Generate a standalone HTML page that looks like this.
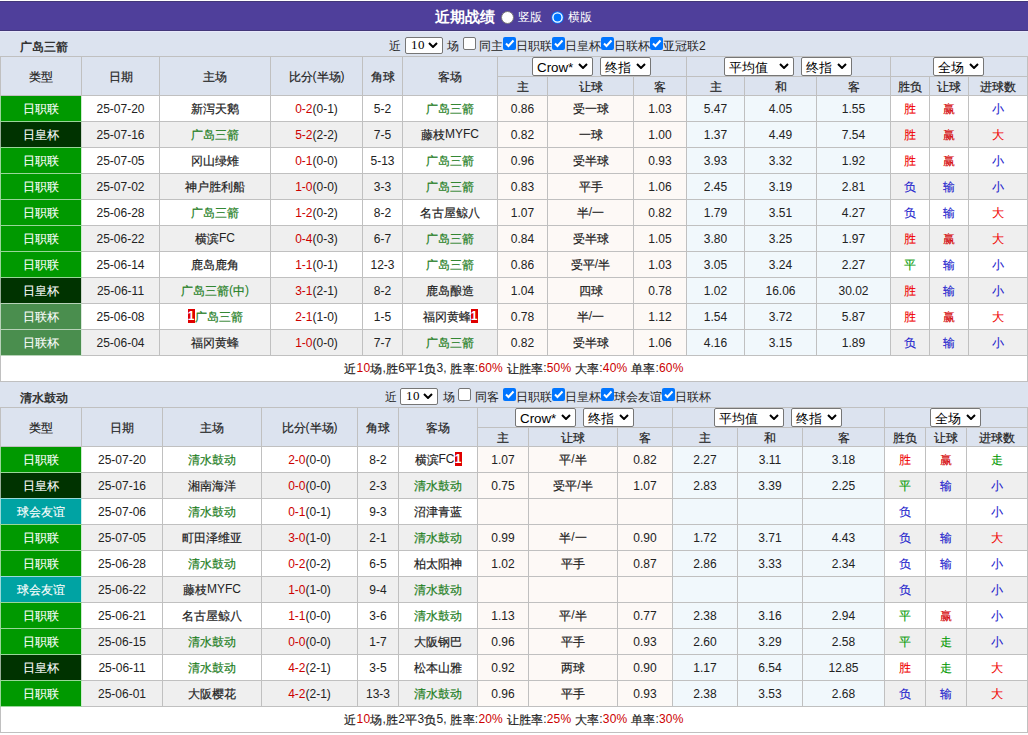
<!DOCTYPE html><html><head><meta charset="utf-8"><style>
*{margin:0;padding:0;box-sizing:content-box}
html,body{width:1028px;height:735px;overflow:hidden;background:#fff}
body{position:relative;font-family:"Liberation Sans",sans-serif;font-size:12px;color:#222}
div{position:absolute}
.c{display:flex;align-items:center;justify-content:center;white-space:nowrap}
.t{white-space:nowrap;line-height:14px}
.sel{background:#fff;border:1px solid #767676;border-radius:2px;color:#000;white-space:nowrap;text-indent:4px}
.sel .chev{position:absolute}
.cb{width:11px;height:11px;border:1px solid #767676;border-radius:2px;background:#fff}
.cb.on{width:13px;height:13px;border:0;background:#0075ff}
.cb svg{position:absolute;left:0;top:0}
.k{font-style:normal;position:relative;top:1px;-webkit-text-stroke:0.2px currentColor}
.r .k{-webkit-text-stroke:0.1px currentColor}
.ty .k{-webkit-text-stroke:0.1px currentColor}
.bd{display:inline-block;background:#e00000;color:#fff;font-weight:bold;width:7px;text-align:center;line-height:14px;height:14px;font-size:12px}
</style></head><body><div style="left:0;top:1px;width:1028px;height:28px;background:#4f3f9b;border-top:1px solid #433879;border-bottom:1px solid #433879"></div>
<div style="left:0;top:31px;width:1028px;height:1px;background:#e8e8fb"></div>
<div style="left:0;top:32px;width:1028px;height:701px;background:#dce3ef"></div>
<div class="t" style="left:435px;top:9px;color:#fff;font-weight:bold;font-size:15px;line-height:16px">近期战绩</div>
<div style="left:501px;top:11px;width:11px;height:11px;border:1px solid #767676;border-radius:50%;background:#fff"></div>
<div class="t" style="left:518px;top:10px;color:#fff">竖版</div>
<svg style="position:absolute;left:551px;top:11px" width="13" height="13" viewBox="0 0 13 13"><circle cx="6.5" cy="6.5" r="6.2" fill="#0075ff"/><circle cx="6.5" cy="6.5" r="4.6" fill="none" stroke="#fff" stroke-width="1.4"/></svg>
<div class="t" style="left:568px;top:10px;color:#fff">横版</div>
<div class="t" style="left:20px;top:40px;font-weight:bold;color:#333">广岛三箭</div>
<div class="t" style="left:389px;top:39px;">近</div>
<div class="sel" style="left:405px;top:37px;width:36px;height:15px;font-family:'Liberation Serif',serif;letter-spacing:0.5px;text-indent:5px;font-size:13px;line-height:15px"><span style="position:relative;top:-1px">10</span><svg class="chev" style="left:22px;top:4px" width="10" height="6" viewBox="0 0 10 6"><path d="M1 1 L5 5 L9 1" fill="none" stroke="#000" stroke-width="2"/></svg></div>
<div class="t" style="left:447px;top:39px;">场</div>
<div class="cb" style="left:463px;top:37px"></div>
<div class="t" style="left:479px;top:39px;">同主</div>
<div class="cb on" style="left:503px;top:37px"><svg width="13" height="13" viewBox="0 0 13 13"><path d="M3 6.5 L5.5 9 L10.5 3.5" fill="none" stroke="#fff" stroke-width="2"/></svg></div>
<div class="t" style="left:516px;top:39px;">日职联</div>
<div class="cb on" style="left:552px;top:37px"><svg width="13" height="13" viewBox="0 0 13 13"><path d="M3 6.5 L5.5 9 L10.5 3.5" fill="none" stroke="#fff" stroke-width="2"/></svg></div>
<div class="t" style="left:565px;top:39px;">日皇杯</div>
<div class="cb on" style="left:601px;top:37px"><svg width="13" height="13" viewBox="0 0 13 13"><path d="M3 6.5 L5.5 9 L10.5 3.5" fill="none" stroke="#fff" stroke-width="2"/></svg></div>
<div class="t" style="left:614px;top:39px;">日联杯</div>
<div class="cb on" style="left:650px;top:37px"><svg width="13" height="13" viewBox="0 0 13 13"><path d="M3 6.5 L5.5 9 L10.5 3.5" fill="none" stroke="#fff" stroke-width="2"/></svg></div>
<div class="t" style="left:663px;top:39px;">亚冠联2</div>
<div style="left:0;top:56px;width:1028px;height:326px;background:#c0c0c0"></div>
<div class="c" style="left:1px;top:57px;width:80px;height:38px;background:#dce3ef"><span><i class="k">类型</i></span></div>
<div class="c" style="left:82px;top:57px;width:77px;height:38px;background:#dce3ef"><span><i class="k">日期</i></span></div>
<div class="c" style="left:160px;top:57px;width:110px;height:38px;background:#dce3ef"><span><i class="k">主场</i></span></div>
<div class="c" style="left:271px;top:57px;width:91px;height:38px;background:#dce3ef"><span><i class="k">比分</i>(<i class="k">半场</i>)</span></div>
<div class="c" style="left:363px;top:57px;width:39px;height:38px;background:#dce3ef"><span><i class="k">角球</i></span></div>
<div class="c" style="left:403px;top:57px;width:94px;height:38px;background:#dce3ef"><span><i class="k">客场</i></span></div>
<div style="left:498px;top:57px;width:188px;height:19px;background:#dce3ef"></div>
<div style="left:687px;top:57px;width:203px;height:19px;background:#dce3ef"></div>
<div style="left:891px;top:57px;width:136px;height:19px;background:#dce3ef"></div>
<div class="c" style="left:498px;top:77px;width:49px;height:18px;background:#dce3ef"><span><i class="k">主</i></span></div>
<div class="c" style="left:548px;top:77px;width:85px;height:18px;background:#dce3ef"><span><i class="k">让球</i></span></div>
<div class="c" style="left:634px;top:77px;width:52px;height:18px;background:#dce3ef"><span><i class="k">客</i></span></div>
<div class="c" style="left:687px;top:77px;width:57px;height:18px;background:#dce3ef"><span><i class="k">主</i></span></div>
<div class="c" style="left:745px;top:77px;width:71px;height:18px;background:#dce3ef"><span><i class="k">和</i></span></div>
<div class="c" style="left:817px;top:77px;width:73px;height:18px;background:#dce3ef"><span><i class="k">客</i></span></div>
<div class="c" style="left:891px;top:77px;width:38px;height:18px;background:#dce3ef"><span><i class="k">胜负</i></span></div>
<div class="c" style="left:930px;top:77px;width:38px;height:18px;background:#dce3ef"><span><i class="k">让球</i></span></div>
<div class="c" style="left:969px;top:77px;width:58px;height:18px;background:#dce3ef"><span><i class="k">进球数</i></span></div>
<div class="sel" style="left:532px;top:57px;width:59px;height:17px;font-family:'Liberation Sans',sans-serif;font-size:13.33px;line-height:17px"><span style="position:relative;top:1px">Crow*</span><svg class="chev" style="left:45px;top:5px" width="10" height="6" viewBox="0 0 10 6"><path d="M1 1 L5 5 L9 1" fill="none" stroke="#000" stroke-width="2"/></svg></div>
<div class="sel" style="left:600px;top:57px;width:49px;height:17px;font-family:'Liberation Sans',sans-serif;font-size:13.33px;line-height:17px"><span style="position:relative;top:1px">终指</span><svg class="chev" style="left:35px;top:5px" width="10" height="6" viewBox="0 0 10 6"><path d="M1 1 L5 5 L9 1" fill="none" stroke="#000" stroke-width="2"/></svg></div>
<div class="sel" style="left:724px;top:57px;width:68px;height:17px;font-family:'Liberation Sans',sans-serif;font-size:13.33px;line-height:17px"><span style="position:relative;top:1px">平均值</span><svg class="chev" style="left:54px;top:5px" width="10" height="6" viewBox="0 0 10 6"><path d="M1 1 L5 5 L9 1" fill="none" stroke="#000" stroke-width="2"/></svg></div>
<div class="sel" style="left:801px;top:57px;width:49px;height:17px;font-family:'Liberation Sans',sans-serif;font-size:13.33px;line-height:17px"><span style="position:relative;top:1px">终指</span><svg class="chev" style="left:35px;top:5px" width="10" height="6" viewBox="0 0 10 6"><path d="M1 1 L5 5 L9 1" fill="none" stroke="#000" stroke-width="2"/></svg></div>
<div class="sel" style="left:933px;top:57px;width:49px;height:17px;font-family:'Liberation Sans',sans-serif;font-size:13.33px;line-height:17px"><span style="position:relative;top:1px">全场</span><svg class="chev" style="left:35px;top:5px" width="10" height="6" viewBox="0 0 10 6"><path d="M1 1 L5 5 L9 1" fill="none" stroke="#000" stroke-width="2"/></svg></div>
<div style="left:0px;top:96px;width:1px;height:25px;background:#99d699"></div>
<div style="left:81px;top:96px;width:1px;height:25px;background:#ccebcc"></div>
<div class="c" style="left:1px;top:96px;width:80px;height:25px;background:#009900;color:#fff"><span><span class="ty"><i class="k">日职联</i></span></span></div>
<div style="left:0px;top:121px;width:82px;height:1px;background:#99d699"></div>
<div class="c" style="left:82px;top:96px;width:77px;height:25px;background:#fff"><span>25-07-20</span></div>
<div class="c" style="left:160px;top:96px;width:110px;height:25px;background:#fff"><span><i class="k">新泻天鹅</i></span></div>
<div class="c" style="left:271px;top:96px;width:91px;height:25px;background:#fff"><span><span style="color:#cc0000">0-2</span>(0-1)</span></div>
<div class="c" style="left:363px;top:96px;width:39px;height:25px;background:#fff"><span>5-2</span></div>
<div class="c" style="left:403px;top:96px;width:94px;height:25px;background:#fff"><span><span style="color:#1f801f"><i class="k">广岛三箭</i></span></span></div>
<div class="c" style="left:498px;top:96px;width:49px;height:25px;background:#fdf9f6"><span>0.86</span></div>
<div class="c" style="left:548px;top:96px;width:85px;height:25px;background:#fdf9f6"><span><i class="k">受一球</i></span></div>
<div class="c" style="left:634px;top:96px;width:52px;height:25px;background:#fdf9f6"><span>1.03</span></div>
<div class="c" style="left:687px;top:96px;width:57px;height:25px;background:#f1f8fc"><span>5.47</span></div>
<div class="c" style="left:745px;top:96px;width:71px;height:25px;background:#f1f8fc"><span>4.05</span></div>
<div class="c" style="left:817px;top:96px;width:73px;height:25px;background:#f1f8fc"><span>1.55</span></div>
<div class="c" style="left:891px;top:96px;width:38px;height:25px;background:#fff"><span><span class="r" style="color:#f00000"><i class="k">胜</i></span></span></div>
<div class="c" style="left:930px;top:96px;width:38px;height:25px;background:#fff"><span><span class="r" style="color:#d40000"><i class="k">赢</i></span></span></div>
<div class="c" style="left:969px;top:96px;width:58px;height:25px;background:#fff"><span><span class="r" style="color:#1a1acc"><i class="k">小</i></span></span></div>
<div style="left:0px;top:122px;width:1px;height:25px;background:#99ad99"></div>
<div style="left:81px;top:122px;width:1px;height:25px;background:#ccd6cc"></div>
<div class="c" style="left:1px;top:122px;width:80px;height:25px;background:#003300;color:#fff"><span><span class="ty"><i class="k">日皇杯</i></span></span></div>
<div style="left:0px;top:147px;width:82px;height:1px;background:#99d699"></div>
<div class="c" style="left:82px;top:122px;width:77px;height:25px;background:#efefef"><span>25-07-16</span></div>
<div class="c" style="left:160px;top:122px;width:110px;height:25px;background:#efefef"><span><span style="color:#1f801f"><i class="k">广岛三箭</i></span></span></div>
<div class="c" style="left:271px;top:122px;width:91px;height:25px;background:#efefef"><span><span style="color:#cc0000">5-2</span>(2-2)</span></div>
<div class="c" style="left:363px;top:122px;width:39px;height:25px;background:#efefef"><span>7-5</span></div>
<div class="c" style="left:403px;top:122px;width:94px;height:25px;background:#efefef"><span><i class="k">藤枝</i>MYFC</span></div>
<div class="c" style="left:498px;top:122px;width:49px;height:25px;background:#fdf9f6"><span>0.82</span></div>
<div class="c" style="left:548px;top:122px;width:85px;height:25px;background:#fdf9f6"><span><i class="k">一球</i></span></div>
<div class="c" style="left:634px;top:122px;width:52px;height:25px;background:#fdf9f6"><span>1.00</span></div>
<div class="c" style="left:687px;top:122px;width:57px;height:25px;background:#f1f8fc"><span>1.37</span></div>
<div class="c" style="left:745px;top:122px;width:71px;height:25px;background:#f1f8fc"><span>4.49</span></div>
<div class="c" style="left:817px;top:122px;width:73px;height:25px;background:#f1f8fc"><span>7.54</span></div>
<div class="c" style="left:891px;top:122px;width:38px;height:25px;background:#efefef"><span><span class="r" style="color:#f00000"><i class="k">胜</i></span></span></div>
<div class="c" style="left:930px;top:122px;width:38px;height:25px;background:#efefef"><span><span class="r" style="color:#d40000"><i class="k">赢</i></span></span></div>
<div class="c" style="left:969px;top:122px;width:58px;height:25px;background:#efefef"><span><span class="r" style="color:#f00000"><i class="k">大</i></span></span></div>
<div style="left:0px;top:148px;width:1px;height:25px;background:#99d699"></div>
<div style="left:81px;top:148px;width:1px;height:25px;background:#ccebcc"></div>
<div class="c" style="left:1px;top:148px;width:80px;height:25px;background:#009900;color:#fff"><span><span class="ty"><i class="k">日职联</i></span></span></div>
<div style="left:0px;top:173px;width:82px;height:1px;background:#99d699"></div>
<div class="c" style="left:82px;top:148px;width:77px;height:25px;background:#fff"><span>25-07-05</span></div>
<div class="c" style="left:160px;top:148px;width:110px;height:25px;background:#fff"><span><i class="k">冈山绿雉</i></span></div>
<div class="c" style="left:271px;top:148px;width:91px;height:25px;background:#fff"><span><span style="color:#cc0000">0-1</span>(0-0)</span></div>
<div class="c" style="left:363px;top:148px;width:39px;height:25px;background:#fff"><span>5-13</span></div>
<div class="c" style="left:403px;top:148px;width:94px;height:25px;background:#fff"><span><span style="color:#1f801f"><i class="k">广岛三箭</i></span></span></div>
<div class="c" style="left:498px;top:148px;width:49px;height:25px;background:#fdf9f6"><span>0.96</span></div>
<div class="c" style="left:548px;top:148px;width:85px;height:25px;background:#fdf9f6"><span><i class="k">受半球</i></span></div>
<div class="c" style="left:634px;top:148px;width:52px;height:25px;background:#fdf9f6"><span>0.93</span></div>
<div class="c" style="left:687px;top:148px;width:57px;height:25px;background:#f1f8fc"><span>3.93</span></div>
<div class="c" style="left:745px;top:148px;width:71px;height:25px;background:#f1f8fc"><span>3.32</span></div>
<div class="c" style="left:817px;top:148px;width:73px;height:25px;background:#f1f8fc"><span>1.92</span></div>
<div class="c" style="left:891px;top:148px;width:38px;height:25px;background:#fff"><span><span class="r" style="color:#f00000"><i class="k">胜</i></span></span></div>
<div class="c" style="left:930px;top:148px;width:38px;height:25px;background:#fff"><span><span class="r" style="color:#d40000"><i class="k">赢</i></span></span></div>
<div class="c" style="left:969px;top:148px;width:58px;height:25px;background:#fff"><span><span class="r" style="color:#1a1acc"><i class="k">小</i></span></span></div>
<div style="left:0px;top:174px;width:1px;height:25px;background:#99d699"></div>
<div style="left:81px;top:174px;width:1px;height:25px;background:#ccebcc"></div>
<div class="c" style="left:1px;top:174px;width:80px;height:25px;background:#009900;color:#fff"><span><span class="ty"><i class="k">日职联</i></span></span></div>
<div style="left:0px;top:199px;width:82px;height:1px;background:#99d699"></div>
<div class="c" style="left:82px;top:174px;width:77px;height:25px;background:#efefef"><span>25-07-02</span></div>
<div class="c" style="left:160px;top:174px;width:110px;height:25px;background:#efefef"><span><i class="k">神户胜利船</i></span></div>
<div class="c" style="left:271px;top:174px;width:91px;height:25px;background:#efefef"><span><span style="color:#cc0000">1-0</span>(0-0)</span></div>
<div class="c" style="left:363px;top:174px;width:39px;height:25px;background:#efefef"><span>3-3</span></div>
<div class="c" style="left:403px;top:174px;width:94px;height:25px;background:#efefef"><span><span style="color:#1f801f"><i class="k">广岛三箭</i></span></span></div>
<div class="c" style="left:498px;top:174px;width:49px;height:25px;background:#fdf9f6"><span>0.83</span></div>
<div class="c" style="left:548px;top:174px;width:85px;height:25px;background:#fdf9f6"><span><i class="k">平手</i></span></div>
<div class="c" style="left:634px;top:174px;width:52px;height:25px;background:#fdf9f6"><span>1.06</span></div>
<div class="c" style="left:687px;top:174px;width:57px;height:25px;background:#f1f8fc"><span>2.45</span></div>
<div class="c" style="left:745px;top:174px;width:71px;height:25px;background:#f1f8fc"><span>3.19</span></div>
<div class="c" style="left:817px;top:174px;width:73px;height:25px;background:#f1f8fc"><span>2.81</span></div>
<div class="c" style="left:891px;top:174px;width:38px;height:25px;background:#efefef"><span><span class="r" style="color:#1a1acc"><i class="k">负</i></span></span></div>
<div class="c" style="left:930px;top:174px;width:38px;height:25px;background:#efefef"><span><span class="r" style="color:#1a1acc"><i class="k">输</i></span></span></div>
<div class="c" style="left:969px;top:174px;width:58px;height:25px;background:#efefef"><span><span class="r" style="color:#1a1acc"><i class="k">小</i></span></span></div>
<div style="left:0px;top:200px;width:1px;height:25px;background:#99d699"></div>
<div style="left:81px;top:200px;width:1px;height:25px;background:#ccebcc"></div>
<div class="c" style="left:1px;top:200px;width:80px;height:25px;background:#009900;color:#fff"><span><span class="ty"><i class="k">日职联</i></span></span></div>
<div style="left:0px;top:225px;width:82px;height:1px;background:#99d699"></div>
<div class="c" style="left:82px;top:200px;width:77px;height:25px;background:#fff"><span>25-06-28</span></div>
<div class="c" style="left:160px;top:200px;width:110px;height:25px;background:#fff"><span><span style="color:#1f801f"><i class="k">广岛三箭</i></span></span></div>
<div class="c" style="left:271px;top:200px;width:91px;height:25px;background:#fff"><span><span style="color:#cc0000">1-2</span>(0-2)</span></div>
<div class="c" style="left:363px;top:200px;width:39px;height:25px;background:#fff"><span>8-2</span></div>
<div class="c" style="left:403px;top:200px;width:94px;height:25px;background:#fff"><span><i class="k">名古屋鲸八</i></span></div>
<div class="c" style="left:498px;top:200px;width:49px;height:25px;background:#fdf9f6"><span>1.07</span></div>
<div class="c" style="left:548px;top:200px;width:85px;height:25px;background:#fdf9f6"><span><i class="k">半</i>/<i class="k">一</i></span></div>
<div class="c" style="left:634px;top:200px;width:52px;height:25px;background:#fdf9f6"><span>0.82</span></div>
<div class="c" style="left:687px;top:200px;width:57px;height:25px;background:#f1f8fc"><span>1.79</span></div>
<div class="c" style="left:745px;top:200px;width:71px;height:25px;background:#f1f8fc"><span>3.51</span></div>
<div class="c" style="left:817px;top:200px;width:73px;height:25px;background:#f1f8fc"><span>4.27</span></div>
<div class="c" style="left:891px;top:200px;width:38px;height:25px;background:#fff"><span><span class="r" style="color:#1a1acc"><i class="k">负</i></span></span></div>
<div class="c" style="left:930px;top:200px;width:38px;height:25px;background:#fff"><span><span class="r" style="color:#1a1acc"><i class="k">输</i></span></span></div>
<div class="c" style="left:969px;top:200px;width:58px;height:25px;background:#fff"><span><span class="r" style="color:#f00000"><i class="k">大</i></span></span></div>
<div style="left:0px;top:226px;width:1px;height:25px;background:#99d699"></div>
<div style="left:81px;top:226px;width:1px;height:25px;background:#ccebcc"></div>
<div class="c" style="left:1px;top:226px;width:80px;height:25px;background:#009900;color:#fff"><span><span class="ty"><i class="k">日职联</i></span></span></div>
<div style="left:0px;top:251px;width:82px;height:1px;background:#99d699"></div>
<div class="c" style="left:82px;top:226px;width:77px;height:25px;background:#efefef"><span>25-06-22</span></div>
<div class="c" style="left:160px;top:226px;width:110px;height:25px;background:#efefef"><span><i class="k">横滨</i>FC</span></div>
<div class="c" style="left:271px;top:226px;width:91px;height:25px;background:#efefef"><span><span style="color:#cc0000">0-4</span>(0-3)</span></div>
<div class="c" style="left:363px;top:226px;width:39px;height:25px;background:#efefef"><span>6-7</span></div>
<div class="c" style="left:403px;top:226px;width:94px;height:25px;background:#efefef"><span><span style="color:#1f801f"><i class="k">广岛三箭</i></span></span></div>
<div class="c" style="left:498px;top:226px;width:49px;height:25px;background:#fdf9f6"><span>0.84</span></div>
<div class="c" style="left:548px;top:226px;width:85px;height:25px;background:#fdf9f6"><span><i class="k">受半球</i></span></div>
<div class="c" style="left:634px;top:226px;width:52px;height:25px;background:#fdf9f6"><span>1.05</span></div>
<div class="c" style="left:687px;top:226px;width:57px;height:25px;background:#f1f8fc"><span>3.80</span></div>
<div class="c" style="left:745px;top:226px;width:71px;height:25px;background:#f1f8fc"><span>3.25</span></div>
<div class="c" style="left:817px;top:226px;width:73px;height:25px;background:#f1f8fc"><span>1.97</span></div>
<div class="c" style="left:891px;top:226px;width:38px;height:25px;background:#efefef"><span><span class="r" style="color:#f00000"><i class="k">胜</i></span></span></div>
<div class="c" style="left:930px;top:226px;width:38px;height:25px;background:#efefef"><span><span class="r" style="color:#d40000"><i class="k">赢</i></span></span></div>
<div class="c" style="left:969px;top:226px;width:58px;height:25px;background:#efefef"><span><span class="r" style="color:#f00000"><i class="k">大</i></span></span></div>
<div style="left:0px;top:252px;width:1px;height:25px;background:#99d699"></div>
<div style="left:81px;top:252px;width:1px;height:25px;background:#ccebcc"></div>
<div class="c" style="left:1px;top:252px;width:80px;height:25px;background:#009900;color:#fff"><span><span class="ty"><i class="k">日职联</i></span></span></div>
<div style="left:0px;top:277px;width:82px;height:1px;background:#99d699"></div>
<div class="c" style="left:82px;top:252px;width:77px;height:25px;background:#fff"><span>25-06-14</span></div>
<div class="c" style="left:160px;top:252px;width:110px;height:25px;background:#fff"><span><i class="k">鹿岛鹿角</i></span></div>
<div class="c" style="left:271px;top:252px;width:91px;height:25px;background:#fff"><span><span style="color:#cc0000">1-1</span>(0-1)</span></div>
<div class="c" style="left:363px;top:252px;width:39px;height:25px;background:#fff"><span>12-3</span></div>
<div class="c" style="left:403px;top:252px;width:94px;height:25px;background:#fff"><span><span style="color:#1f801f"><i class="k">广岛三箭</i></span></span></div>
<div class="c" style="left:498px;top:252px;width:49px;height:25px;background:#fdf9f6"><span>0.86</span></div>
<div class="c" style="left:548px;top:252px;width:85px;height:25px;background:#fdf9f6"><span><i class="k">受平</i>/<i class="k">半</i></span></div>
<div class="c" style="left:634px;top:252px;width:52px;height:25px;background:#fdf9f6"><span>1.03</span></div>
<div class="c" style="left:687px;top:252px;width:57px;height:25px;background:#f1f8fc"><span>3.05</span></div>
<div class="c" style="left:745px;top:252px;width:71px;height:25px;background:#f1f8fc"><span>3.24</span></div>
<div class="c" style="left:817px;top:252px;width:73px;height:25px;background:#f1f8fc"><span>2.27</span></div>
<div class="c" style="left:891px;top:252px;width:38px;height:25px;background:#fff"><span><span class="r" style="color:#009900"><i class="k">平</i></span></span></div>
<div class="c" style="left:930px;top:252px;width:38px;height:25px;background:#fff"><span><span class="r" style="color:#1a1acc"><i class="k">输</i></span></span></div>
<div class="c" style="left:969px;top:252px;width:58px;height:25px;background:#fff"><span><span class="r" style="color:#1a1acc"><i class="k">小</i></span></span></div>
<div style="left:0px;top:278px;width:1px;height:25px;background:#99ad99"></div>
<div style="left:81px;top:278px;width:1px;height:25px;background:#ccd6cc"></div>
<div class="c" style="left:1px;top:278px;width:80px;height:25px;background:#003300;color:#fff"><span><span class="ty"><i class="k">日皇杯</i></span></span></div>
<div style="left:0px;top:303px;width:82px;height:1px;background:#b7d2b8"></div>
<div class="c" style="left:82px;top:278px;width:77px;height:25px;background:#efefef"><span>25-06-11</span></div>
<div class="c" style="left:160px;top:278px;width:110px;height:25px;background:#efefef"><span><span style="color:#1f801f"><i class="k">广岛三箭</i>(<i class="k">中</i>)</span></span></div>
<div class="c" style="left:271px;top:278px;width:91px;height:25px;background:#efefef"><span><span style="color:#cc0000">3-1</span>(2-1)</span></div>
<div class="c" style="left:363px;top:278px;width:39px;height:25px;background:#efefef"><span>8-2</span></div>
<div class="c" style="left:403px;top:278px;width:94px;height:25px;background:#efefef"><span><i class="k">鹿岛酿造</i></span></div>
<div class="c" style="left:498px;top:278px;width:49px;height:25px;background:#fdf9f6"><span>1.04</span></div>
<div class="c" style="left:548px;top:278px;width:85px;height:25px;background:#fdf9f6"><span><i class="k">四球</i></span></div>
<div class="c" style="left:634px;top:278px;width:52px;height:25px;background:#fdf9f6"><span>0.78</span></div>
<div class="c" style="left:687px;top:278px;width:57px;height:25px;background:#f1f8fc"><span>1.02</span></div>
<div class="c" style="left:745px;top:278px;width:71px;height:25px;background:#f1f8fc"><span>16.06</span></div>
<div class="c" style="left:817px;top:278px;width:73px;height:25px;background:#f1f8fc"><span>30.02</span></div>
<div class="c" style="left:891px;top:278px;width:38px;height:25px;background:#efefef"><span><span class="r" style="color:#f00000"><i class="k">胜</i></span></span></div>
<div class="c" style="left:930px;top:278px;width:38px;height:25px;background:#efefef"><span><span class="r" style="color:#1a1acc"><i class="k">输</i></span></span></div>
<div class="c" style="left:969px;top:278px;width:58px;height:25px;background:#efefef"><span><span class="r" style="color:#1a1acc"><i class="k">小</i></span></span></div>
<div style="left:0px;top:304px;width:1px;height:25px;background:#b7d2b8"></div>
<div style="left:81px;top:304px;width:1px;height:25px;background:#dbe8dc"></div>
<div class="c" style="left:1px;top:304px;width:80px;height:25px;background:#4a8e4e;color:#fff"><span><span class="ty"><i class="k">日联杯</i></span></span></div>
<div style="left:0px;top:329px;width:82px;height:1px;background:#b7d2b8"></div>
<div class="c" style="left:82px;top:304px;width:77px;height:25px;background:#fff"><span>25-06-08</span></div>
<div class="c" style="left:160px;top:304px;width:110px;height:25px;background:#fff"><span><b class="bd">1</b><span style="color:#1f801f"><i class="k">广岛三箭</i></span></span></div>
<div class="c" style="left:271px;top:304px;width:91px;height:25px;background:#fff"><span><span style="color:#cc0000">2-1</span>(1-0)</span></div>
<div class="c" style="left:363px;top:304px;width:39px;height:25px;background:#fff"><span>1-5</span></div>
<div class="c" style="left:403px;top:304px;width:94px;height:25px;background:#fff"><span><i class="k">福冈黄蜂</i><b class="bd">1</b></span></div>
<div class="c" style="left:498px;top:304px;width:49px;height:25px;background:#fdf9f6"><span>0.78</span></div>
<div class="c" style="left:548px;top:304px;width:85px;height:25px;background:#fdf9f6"><span><i class="k">半</i>/<i class="k">一</i></span></div>
<div class="c" style="left:634px;top:304px;width:52px;height:25px;background:#fdf9f6"><span>1.12</span></div>
<div class="c" style="left:687px;top:304px;width:57px;height:25px;background:#f1f8fc"><span>1.54</span></div>
<div class="c" style="left:745px;top:304px;width:71px;height:25px;background:#f1f8fc"><span>3.72</span></div>
<div class="c" style="left:817px;top:304px;width:73px;height:25px;background:#f1f8fc"><span>5.87</span></div>
<div class="c" style="left:891px;top:304px;width:38px;height:25px;background:#fff"><span><span class="r" style="color:#f00000"><i class="k">胜</i></span></span></div>
<div class="c" style="left:930px;top:304px;width:38px;height:25px;background:#fff"><span><span class="r" style="color:#d40000"><i class="k">赢</i></span></span></div>
<div class="c" style="left:969px;top:304px;width:58px;height:25px;background:#fff"><span><span class="r" style="color:#f00000"><i class="k">大</i></span></span></div>
<div style="left:0px;top:330px;width:1px;height:25px;background:#b7d2b8"></div>
<div style="left:81px;top:330px;width:1px;height:25px;background:#dbe8dc"></div>
<div class="c" style="left:1px;top:330px;width:80px;height:25px;background:#4a8e4e;color:#fff"><span><span class="ty"><i class="k">日联杯</i></span></span></div>
<div style="left:0px;top:355px;width:82px;height:1px;background:#b7d2b8"></div>
<div class="c" style="left:82px;top:330px;width:77px;height:25px;background:#efefef"><span>25-06-04</span></div>
<div class="c" style="left:160px;top:330px;width:110px;height:25px;background:#efefef"><span><i class="k">福冈黄蜂</i></span></div>
<div class="c" style="left:271px;top:330px;width:91px;height:25px;background:#efefef"><span><span style="color:#cc0000">1-0</span>(0-0)</span></div>
<div class="c" style="left:363px;top:330px;width:39px;height:25px;background:#efefef"><span>7-7</span></div>
<div class="c" style="left:403px;top:330px;width:94px;height:25px;background:#efefef"><span><span style="color:#1f801f"><i class="k">广岛三箭</i></span></span></div>
<div class="c" style="left:498px;top:330px;width:49px;height:25px;background:#fdf9f6"><span>0.82</span></div>
<div class="c" style="left:548px;top:330px;width:85px;height:25px;background:#fdf9f6"><span><i class="k">受半球</i></span></div>
<div class="c" style="left:634px;top:330px;width:52px;height:25px;background:#fdf9f6"><span>1.06</span></div>
<div class="c" style="left:687px;top:330px;width:57px;height:25px;background:#f1f8fc"><span>4.16</span></div>
<div class="c" style="left:745px;top:330px;width:71px;height:25px;background:#f1f8fc"><span>3.15</span></div>
<div class="c" style="left:817px;top:330px;width:73px;height:25px;background:#f1f8fc"><span>1.89</span></div>
<div class="c" style="left:891px;top:330px;width:38px;height:25px;background:#efefef"><span><span class="r" style="color:#1a1acc"><i class="k">负</i></span></span></div>
<div class="c" style="left:930px;top:330px;width:38px;height:25px;background:#efefef"><span><span class="r" style="color:#1a1acc"><i class="k">输</i></span></span></div>
<div class="c" style="left:969px;top:330px;width:58px;height:25px;background:#efefef"><span><span class="r" style="color:#1a1acc"><i class="k">小</i></span></span></div>
<div class="c" style="left:1px;top:356px;width:1026px;height:25px;background:#fff;letter-spacing:0.2px"><span><i class="k">近</i><span style="color:#cc0000">10</span><i class="k">场</i>,<i class="k">胜</i>6<i class="k">平</i>1<i class="k">负</i>3, <i class="k">胜率</i>:<span style="color:#cc0000">60%</span> <i class="k">让胜率</i>:<span style="color:#cc0000">50%</span> <i class="k">大率</i>:<span style="color:#cc0000">40%</span> <i class="k">单率</i>:<span style="color:#cc0000">60%</span></span></div>
<div style="left:0;top:382px;width:1028px;height:25px;background:#dce3ef"></div>
<div class="t" style="left:20px;top:391px;font-weight:bold;color:#333">清水鼓动</div>
<div class="t" style="left:385px;top:390px;">近</div>
<div class="sel" style="left:400px;top:388px;width:36px;height:15px;font-family:'Liberation Serif',serif;letter-spacing:0.5px;text-indent:5px;font-size:13px;line-height:15px"><span style="position:relative;top:-1px">10</span><svg class="chev" style="left:22px;top:4px" width="10" height="6" viewBox="0 0 10 6"><path d="M1 1 L5 5 L9 1" fill="none" stroke="#000" stroke-width="2"/></svg></div>
<div class="t" style="left:443px;top:390px;">场</div>
<div class="cb" style="left:458px;top:388px"></div>
<div class="t" style="left:475px;top:390px;">同客</div>
<div class="cb on" style="left:503px;top:388px"><svg width="13" height="13" viewBox="0 0 13 13"><path d="M3 6.5 L5.5 9 L10.5 3.5" fill="none" stroke="#fff" stroke-width="2"/></svg></div>
<div class="t" style="left:516px;top:390px;">日职联</div>
<div class="cb on" style="left:552px;top:388px"><svg width="13" height="13" viewBox="0 0 13 13"><path d="M3 6.5 L5.5 9 L10.5 3.5" fill="none" stroke="#fff" stroke-width="2"/></svg></div>
<div class="t" style="left:565px;top:390px;">日皇杯</div>
<div class="cb on" style="left:601px;top:388px"><svg width="13" height="13" viewBox="0 0 13 13"><path d="M3 6.5 L5.5 9 L10.5 3.5" fill="none" stroke="#fff" stroke-width="2"/></svg></div>
<div class="t" style="left:614px;top:390px;">球会友谊</div>
<div class="cb on" style="left:662px;top:388px"><svg width="13" height="13" viewBox="0 0 13 13"><path d="M3 6.5 L5.5 9 L10.5 3.5" fill="none" stroke="#fff" stroke-width="2"/></svg></div>
<div class="t" style="left:675px;top:390px;">日联杯</div>
<div style="left:0;top:407px;width:1028px;height:326px;background:#c0c0c0"></div>
<div class="c" style="left:1px;top:408px;width:80px;height:38px;background:#dce3ef"><span><i class="k">类型</i></span></div>
<div class="c" style="left:82px;top:408px;width:80px;height:38px;background:#dce3ef"><span><i class="k">日期</i></span></div>
<div class="c" style="left:163px;top:408px;width:98px;height:38px;background:#dce3ef"><span><i class="k">主场</i></span></div>
<div class="c" style="left:262px;top:408px;width:95px;height:38px;background:#dce3ef"><span><i class="k">比分</i>(<i class="k">半场</i>)</span></div>
<div class="c" style="left:358px;top:408px;width:40px;height:38px;background:#dce3ef"><span><i class="k">角球</i></span></div>
<div class="c" style="left:399px;top:408px;width:78px;height:38px;background:#dce3ef"><span><i class="k">客场</i></span></div>
<div style="left:478px;top:408px;width:194px;height:19px;background:#dce3ef"></div>
<div style="left:673px;top:408px;width:211px;height:19px;background:#dce3ef"></div>
<div style="left:885px;top:408px;width:142px;height:19px;background:#dce3ef"></div>
<div class="c" style="left:478px;top:428px;width:50px;height:18px;background:#dce3ef"><span><i class="k">主</i></span></div>
<div class="c" style="left:529px;top:428px;width:88px;height:18px;background:#dce3ef"><span><i class="k">让球</i></span></div>
<div class="c" style="left:618px;top:428px;width:54px;height:18px;background:#dce3ef"><span><i class="k">客</i></span></div>
<div class="c" style="left:673px;top:428px;width:64px;height:18px;background:#dce3ef"><span><i class="k">主</i></span></div>
<div class="c" style="left:738px;top:428px;width:64px;height:18px;background:#dce3ef"><span><i class="k">和</i></span></div>
<div class="c" style="left:803px;top:428px;width:81px;height:18px;background:#dce3ef"><span><i class="k">客</i></span></div>
<div class="c" style="left:885px;top:428px;width:40px;height:18px;background:#dce3ef"><span><i class="k">胜负</i></span></div>
<div class="c" style="left:926px;top:428px;width:40px;height:18px;background:#dce3ef"><span><i class="k">让球</i></span></div>
<div class="c" style="left:967px;top:428px;width:60px;height:18px;background:#dce3ef"><span><i class="k">进球数</i></span></div>
<div class="sel" style="left:515px;top:408px;width:59px;height:17px;font-family:'Liberation Sans',sans-serif;font-size:13.33px;line-height:17px"><span style="position:relative;top:1px">Crow*</span><svg class="chev" style="left:45px;top:5px" width="10" height="6" viewBox="0 0 10 6"><path d="M1 1 L5 5 L9 1" fill="none" stroke="#000" stroke-width="2"/></svg></div>
<div class="sel" style="left:583px;top:408px;width:49px;height:17px;font-family:'Liberation Sans',sans-serif;font-size:13.33px;line-height:17px"><span style="position:relative;top:1px">终指</span><svg class="chev" style="left:35px;top:5px" width="10" height="6" viewBox="0 0 10 6"><path d="M1 1 L5 5 L9 1" fill="none" stroke="#000" stroke-width="2"/></svg></div>
<div class="sel" style="left:714px;top:408px;width:68px;height:17px;font-family:'Liberation Sans',sans-serif;font-size:13.33px;line-height:17px"><span style="position:relative;top:1px">平均值</span><svg class="chev" style="left:54px;top:5px" width="10" height="6" viewBox="0 0 10 6"><path d="M1 1 L5 5 L9 1" fill="none" stroke="#000" stroke-width="2"/></svg></div>
<div class="sel" style="left:791px;top:408px;width:49px;height:17px;font-family:'Liberation Sans',sans-serif;font-size:13.33px;line-height:17px"><span style="position:relative;top:1px">终指</span><svg class="chev" style="left:35px;top:5px" width="10" height="6" viewBox="0 0 10 6"><path d="M1 1 L5 5 L9 1" fill="none" stroke="#000" stroke-width="2"/></svg></div>
<div class="sel" style="left:930px;top:408px;width:49px;height:17px;font-family:'Liberation Sans',sans-serif;font-size:13.33px;line-height:17px"><span style="position:relative;top:1px">全场</span><svg class="chev" style="left:35px;top:5px" width="10" height="6" viewBox="0 0 10 6"><path d="M1 1 L5 5 L9 1" fill="none" stroke="#000" stroke-width="2"/></svg></div>
<div style="left:0px;top:447px;width:1px;height:25px;background:#99d699"></div>
<div style="left:81px;top:447px;width:1px;height:25px;background:#ccebcc"></div>
<div class="c" style="left:1px;top:447px;width:80px;height:25px;background:#009900;color:#fff"><span><span class="ty"><i class="k">日职联</i></span></span></div>
<div style="left:0px;top:472px;width:82px;height:1px;background:#99d699"></div>
<div class="c" style="left:82px;top:447px;width:80px;height:25px;background:#fff"><span>25-07-20</span></div>
<div class="c" style="left:163px;top:447px;width:98px;height:25px;background:#fff"><span><span style="color:#1f801f"><i class="k">清水鼓动</i></span></span></div>
<div class="c" style="left:262px;top:447px;width:95px;height:25px;background:#fff"><span><span style="color:#cc0000">2-0</span>(0-0)</span></div>
<div class="c" style="left:358px;top:447px;width:40px;height:25px;background:#fff"><span>8-2</span></div>
<div class="c" style="left:399px;top:447px;width:78px;height:25px;background:#fff"><span><i class="k">横滨</i>FC<b class="bd">1</b></span></div>
<div class="c" style="left:478px;top:447px;width:50px;height:25px;background:#fdf9f6"><span>1.07</span></div>
<div class="c" style="left:529px;top:447px;width:88px;height:25px;background:#fdf9f6"><span><i class="k">平</i>/<i class="k">半</i></span></div>
<div class="c" style="left:618px;top:447px;width:54px;height:25px;background:#fdf9f6"><span>0.82</span></div>
<div class="c" style="left:673px;top:447px;width:64px;height:25px;background:#f1f8fc"><span>2.27</span></div>
<div class="c" style="left:738px;top:447px;width:64px;height:25px;background:#f1f8fc"><span>3.11</span></div>
<div class="c" style="left:803px;top:447px;width:81px;height:25px;background:#f1f8fc"><span>3.18</span></div>
<div class="c" style="left:885px;top:447px;width:40px;height:25px;background:#fff"><span><span class="r" style="color:#f00000"><i class="k">胜</i></span></span></div>
<div class="c" style="left:926px;top:447px;width:40px;height:25px;background:#fff"><span><span class="r" style="color:#d40000"><i class="k">赢</i></span></span></div>
<div class="c" style="left:967px;top:447px;width:60px;height:25px;background:#fff"><span><span class="r" style="color:#009900"><i class="k">走</i></span></span></div>
<div style="left:0px;top:473px;width:1px;height:25px;background:#99ad99"></div>
<div style="left:81px;top:473px;width:1px;height:25px;background:#ccd6cc"></div>
<div class="c" style="left:1px;top:473px;width:80px;height:25px;background:#003300;color:#fff"><span><span class="ty"><i class="k">日皇杯</i></span></span></div>
<div style="left:0px;top:498px;width:82px;height:1px;background:#99dada"></div>
<div class="c" style="left:82px;top:473px;width:80px;height:25px;background:#efefef"><span>25-07-16</span></div>
<div class="c" style="left:163px;top:473px;width:98px;height:25px;background:#efefef"><span><i class="k">湘南海洋</i></span></div>
<div class="c" style="left:262px;top:473px;width:95px;height:25px;background:#efefef"><span><span style="color:#cc0000">0-0</span>(0-0)</span></div>
<div class="c" style="left:358px;top:473px;width:40px;height:25px;background:#efefef"><span>2-3</span></div>
<div class="c" style="left:399px;top:473px;width:78px;height:25px;background:#efefef"><span><span style="color:#1f801f"><i class="k">清水鼓动</i></span></span></div>
<div class="c" style="left:478px;top:473px;width:50px;height:25px;background:#fdf9f6"><span>0.75</span></div>
<div class="c" style="left:529px;top:473px;width:88px;height:25px;background:#fdf9f6"><span><i class="k">受平</i>/<i class="k">半</i></span></div>
<div class="c" style="left:618px;top:473px;width:54px;height:25px;background:#fdf9f6"><span>1.07</span></div>
<div class="c" style="left:673px;top:473px;width:64px;height:25px;background:#f1f8fc"><span>2.83</span></div>
<div class="c" style="left:738px;top:473px;width:64px;height:25px;background:#f1f8fc"><span>3.39</span></div>
<div class="c" style="left:803px;top:473px;width:81px;height:25px;background:#f1f8fc"><span>2.25</span></div>
<div class="c" style="left:885px;top:473px;width:40px;height:25px;background:#efefef"><span><span class="r" style="color:#009900"><i class="k">平</i></span></span></div>
<div class="c" style="left:926px;top:473px;width:40px;height:25px;background:#efefef"><span><span class="r" style="color:#1a1acc"><i class="k">输</i></span></span></div>
<div class="c" style="left:967px;top:473px;width:60px;height:25px;background:#efefef"><span><span class="r" style="color:#1a1acc"><i class="k">小</i></span></span></div>
<div style="left:0px;top:499px;width:1px;height:25px;background:#99dada"></div>
<div style="left:81px;top:499px;width:1px;height:25px;background:#cceded"></div>
<div class="c" style="left:1px;top:499px;width:80px;height:25px;background:#00a3a3;color:#fff"><span><span class="ty"><i class="k">球会友谊</i></span></span></div>
<div style="left:0px;top:524px;width:82px;height:1px;background:#99d699"></div>
<div class="c" style="left:82px;top:499px;width:80px;height:25px;background:#fff"><span>25-07-06</span></div>
<div class="c" style="left:163px;top:499px;width:98px;height:25px;background:#fff"><span><span style="color:#1f801f"><i class="k">清水鼓动</i></span></span></div>
<div class="c" style="left:262px;top:499px;width:95px;height:25px;background:#fff"><span><span style="color:#cc0000">0-1</span>(0-1)</span></div>
<div class="c" style="left:358px;top:499px;width:40px;height:25px;background:#fff"><span>9-3</span></div>
<div class="c" style="left:399px;top:499px;width:78px;height:25px;background:#fff"><span><i class="k">沼津青蓝</i></span></div>
<div class="c" style="left:478px;top:499px;width:50px;height:25px;background:#fdf9f6"></div>
<div class="c" style="left:529px;top:499px;width:88px;height:25px;background:#fdf9f6"></div>
<div class="c" style="left:618px;top:499px;width:54px;height:25px;background:#fdf9f6"></div>
<div class="c" style="left:673px;top:499px;width:64px;height:25px;background:#f1f8fc"></div>
<div class="c" style="left:738px;top:499px;width:64px;height:25px;background:#f1f8fc"></div>
<div class="c" style="left:803px;top:499px;width:81px;height:25px;background:#f1f8fc"></div>
<div class="c" style="left:885px;top:499px;width:40px;height:25px;background:#fff"><span><span class="r" style="color:#1a1acc"><i class="k">负</i></span></span></div>
<div class="c" style="left:926px;top:499px;width:40px;height:25px;background:#fff"><span><span class="r" style="color:#000"></span></span></div>
<div class="c" style="left:967px;top:499px;width:60px;height:25px;background:#fff"><span><span class="r" style="color:#1a1acc"><i class="k">小</i></span></span></div>
<div style="left:0px;top:525px;width:1px;height:25px;background:#99d699"></div>
<div style="left:81px;top:525px;width:1px;height:25px;background:#ccebcc"></div>
<div class="c" style="left:1px;top:525px;width:80px;height:25px;background:#009900;color:#fff"><span><span class="ty"><i class="k">日职联</i></span></span></div>
<div style="left:0px;top:550px;width:82px;height:1px;background:#99d699"></div>
<div class="c" style="left:82px;top:525px;width:80px;height:25px;background:#efefef"><span>25-07-05</span></div>
<div class="c" style="left:163px;top:525px;width:98px;height:25px;background:#efefef"><span><i class="k">町田泽维亚</i></span></div>
<div class="c" style="left:262px;top:525px;width:95px;height:25px;background:#efefef"><span><span style="color:#cc0000">3-0</span>(1-0)</span></div>
<div class="c" style="left:358px;top:525px;width:40px;height:25px;background:#efefef"><span>2-1</span></div>
<div class="c" style="left:399px;top:525px;width:78px;height:25px;background:#efefef"><span><span style="color:#1f801f"><i class="k">清水鼓动</i></span></span></div>
<div class="c" style="left:478px;top:525px;width:50px;height:25px;background:#fdf9f6"><span>0.99</span></div>
<div class="c" style="left:529px;top:525px;width:88px;height:25px;background:#fdf9f6"><span><i class="k">半</i>/<i class="k">一</i></span></div>
<div class="c" style="left:618px;top:525px;width:54px;height:25px;background:#fdf9f6"><span>0.90</span></div>
<div class="c" style="left:673px;top:525px;width:64px;height:25px;background:#f1f8fc"><span>1.72</span></div>
<div class="c" style="left:738px;top:525px;width:64px;height:25px;background:#f1f8fc"><span>3.71</span></div>
<div class="c" style="left:803px;top:525px;width:81px;height:25px;background:#f1f8fc"><span>4.43</span></div>
<div class="c" style="left:885px;top:525px;width:40px;height:25px;background:#efefef"><span><span class="r" style="color:#1a1acc"><i class="k">负</i></span></span></div>
<div class="c" style="left:926px;top:525px;width:40px;height:25px;background:#efefef"><span><span class="r" style="color:#1a1acc"><i class="k">输</i></span></span></div>
<div class="c" style="left:967px;top:525px;width:60px;height:25px;background:#efefef"><span><span class="r" style="color:#f00000"><i class="k">大</i></span></span></div>
<div style="left:0px;top:551px;width:1px;height:25px;background:#99d699"></div>
<div style="left:81px;top:551px;width:1px;height:25px;background:#ccebcc"></div>
<div class="c" style="left:1px;top:551px;width:80px;height:25px;background:#009900;color:#fff"><span><span class="ty"><i class="k">日职联</i></span></span></div>
<div style="left:0px;top:576px;width:82px;height:1px;background:#99dada"></div>
<div class="c" style="left:82px;top:551px;width:80px;height:25px;background:#fff"><span>25-06-28</span></div>
<div class="c" style="left:163px;top:551px;width:98px;height:25px;background:#fff"><span><span style="color:#1f801f"><i class="k">清水鼓动</i></span></span></div>
<div class="c" style="left:262px;top:551px;width:95px;height:25px;background:#fff"><span><span style="color:#cc0000">0-2</span>(0-2)</span></div>
<div class="c" style="left:358px;top:551px;width:40px;height:25px;background:#fff"><span>6-5</span></div>
<div class="c" style="left:399px;top:551px;width:78px;height:25px;background:#fff"><span><i class="k">柏太阳神</i></span></div>
<div class="c" style="left:478px;top:551px;width:50px;height:25px;background:#fdf9f6"><span>1.02</span></div>
<div class="c" style="left:529px;top:551px;width:88px;height:25px;background:#fdf9f6"><span><i class="k">平手</i></span></div>
<div class="c" style="left:618px;top:551px;width:54px;height:25px;background:#fdf9f6"><span>0.87</span></div>
<div class="c" style="left:673px;top:551px;width:64px;height:25px;background:#f1f8fc"><span>2.86</span></div>
<div class="c" style="left:738px;top:551px;width:64px;height:25px;background:#f1f8fc"><span>3.33</span></div>
<div class="c" style="left:803px;top:551px;width:81px;height:25px;background:#f1f8fc"><span>2.34</span></div>
<div class="c" style="left:885px;top:551px;width:40px;height:25px;background:#fff"><span><span class="r" style="color:#1a1acc"><i class="k">负</i></span></span></div>
<div class="c" style="left:926px;top:551px;width:40px;height:25px;background:#fff"><span><span class="r" style="color:#1a1acc"><i class="k">输</i></span></span></div>
<div class="c" style="left:967px;top:551px;width:60px;height:25px;background:#fff"><span><span class="r" style="color:#1a1acc"><i class="k">小</i></span></span></div>
<div style="left:0px;top:577px;width:1px;height:25px;background:#99dada"></div>
<div style="left:81px;top:577px;width:1px;height:25px;background:#cceded"></div>
<div class="c" style="left:1px;top:577px;width:80px;height:25px;background:#00a3a3;color:#fff"><span><span class="ty"><i class="k">球会友谊</i></span></span></div>
<div style="left:0px;top:602px;width:82px;height:1px;background:#99d699"></div>
<div class="c" style="left:82px;top:577px;width:80px;height:25px;background:#efefef"><span>25-06-22</span></div>
<div class="c" style="left:163px;top:577px;width:98px;height:25px;background:#efefef"><span><i class="k">藤枝</i>MYFC</span></div>
<div class="c" style="left:262px;top:577px;width:95px;height:25px;background:#efefef"><span><span style="color:#cc0000">1-0</span>(1-0)</span></div>
<div class="c" style="left:358px;top:577px;width:40px;height:25px;background:#efefef"><span>9-4</span></div>
<div class="c" style="left:399px;top:577px;width:78px;height:25px;background:#efefef"><span><span style="color:#1f801f"><i class="k">清水鼓动</i></span></span></div>
<div class="c" style="left:478px;top:577px;width:50px;height:25px;background:#fdf9f6"></div>
<div class="c" style="left:529px;top:577px;width:88px;height:25px;background:#fdf9f6"></div>
<div class="c" style="left:618px;top:577px;width:54px;height:25px;background:#fdf9f6"></div>
<div class="c" style="left:673px;top:577px;width:64px;height:25px;background:#f1f8fc"></div>
<div class="c" style="left:738px;top:577px;width:64px;height:25px;background:#f1f8fc"></div>
<div class="c" style="left:803px;top:577px;width:81px;height:25px;background:#f1f8fc"></div>
<div class="c" style="left:885px;top:577px;width:40px;height:25px;background:#efefef"><span><span class="r" style="color:#1a1acc"><i class="k">负</i></span></span></div>
<div class="c" style="left:926px;top:577px;width:40px;height:25px;background:#efefef"><span><span class="r" style="color:#000"></span></span></div>
<div class="c" style="left:967px;top:577px;width:60px;height:25px;background:#efefef"><span><span class="r" style="color:#1a1acc"><i class="k">小</i></span></span></div>
<div style="left:0px;top:603px;width:1px;height:25px;background:#99d699"></div>
<div style="left:81px;top:603px;width:1px;height:25px;background:#ccebcc"></div>
<div class="c" style="left:1px;top:603px;width:80px;height:25px;background:#009900;color:#fff"><span><span class="ty"><i class="k">日职联</i></span></span></div>
<div style="left:0px;top:628px;width:82px;height:1px;background:#99d699"></div>
<div class="c" style="left:82px;top:603px;width:80px;height:25px;background:#fff"><span>25-06-21</span></div>
<div class="c" style="left:163px;top:603px;width:98px;height:25px;background:#fff"><span><i class="k">名古屋鲸八</i></span></div>
<div class="c" style="left:262px;top:603px;width:95px;height:25px;background:#fff"><span><span style="color:#cc0000">1-1</span>(0-0)</span></div>
<div class="c" style="left:358px;top:603px;width:40px;height:25px;background:#fff"><span>3-6</span></div>
<div class="c" style="left:399px;top:603px;width:78px;height:25px;background:#fff"><span><span style="color:#1f801f"><i class="k">清水鼓动</i></span></span></div>
<div class="c" style="left:478px;top:603px;width:50px;height:25px;background:#fdf9f6"><span>1.13</span></div>
<div class="c" style="left:529px;top:603px;width:88px;height:25px;background:#fdf9f6"><span><i class="k">平</i>/<i class="k">半</i></span></div>
<div class="c" style="left:618px;top:603px;width:54px;height:25px;background:#fdf9f6"><span>0.77</span></div>
<div class="c" style="left:673px;top:603px;width:64px;height:25px;background:#f1f8fc"><span>2.38</span></div>
<div class="c" style="left:738px;top:603px;width:64px;height:25px;background:#f1f8fc"><span>3.16</span></div>
<div class="c" style="left:803px;top:603px;width:81px;height:25px;background:#f1f8fc"><span>2.94</span></div>
<div class="c" style="left:885px;top:603px;width:40px;height:25px;background:#fff"><span><span class="r" style="color:#009900"><i class="k">平</i></span></span></div>
<div class="c" style="left:926px;top:603px;width:40px;height:25px;background:#fff"><span><span class="r" style="color:#d40000"><i class="k">赢</i></span></span></div>
<div class="c" style="left:967px;top:603px;width:60px;height:25px;background:#fff"><span><span class="r" style="color:#1a1acc"><i class="k">小</i></span></span></div>
<div style="left:0px;top:629px;width:1px;height:25px;background:#99d699"></div>
<div style="left:81px;top:629px;width:1px;height:25px;background:#ccebcc"></div>
<div class="c" style="left:1px;top:629px;width:80px;height:25px;background:#009900;color:#fff"><span><span class="ty"><i class="k">日职联</i></span></span></div>
<div style="left:0px;top:654px;width:82px;height:1px;background:#99d699"></div>
<div class="c" style="left:82px;top:629px;width:80px;height:25px;background:#efefef"><span>25-06-15</span></div>
<div class="c" style="left:163px;top:629px;width:98px;height:25px;background:#efefef"><span><span style="color:#1f801f"><i class="k">清水鼓动</i></span></span></div>
<div class="c" style="left:262px;top:629px;width:95px;height:25px;background:#efefef"><span><span style="color:#cc0000">0-0</span>(0-0)</span></div>
<div class="c" style="left:358px;top:629px;width:40px;height:25px;background:#efefef"><span>1-7</span></div>
<div class="c" style="left:399px;top:629px;width:78px;height:25px;background:#efefef"><span><i class="k">大阪钢巴</i></span></div>
<div class="c" style="left:478px;top:629px;width:50px;height:25px;background:#fdf9f6"><span>0.96</span></div>
<div class="c" style="left:529px;top:629px;width:88px;height:25px;background:#fdf9f6"><span><i class="k">平手</i></span></div>
<div class="c" style="left:618px;top:629px;width:54px;height:25px;background:#fdf9f6"><span>0.93</span></div>
<div class="c" style="left:673px;top:629px;width:64px;height:25px;background:#f1f8fc"><span>2.60</span></div>
<div class="c" style="left:738px;top:629px;width:64px;height:25px;background:#f1f8fc"><span>3.29</span></div>
<div class="c" style="left:803px;top:629px;width:81px;height:25px;background:#f1f8fc"><span>2.58</span></div>
<div class="c" style="left:885px;top:629px;width:40px;height:25px;background:#efefef"><span><span class="r" style="color:#009900"><i class="k">平</i></span></span></div>
<div class="c" style="left:926px;top:629px;width:40px;height:25px;background:#efefef"><span><span class="r" style="color:#009900"><i class="k">走</i></span></span></div>
<div class="c" style="left:967px;top:629px;width:60px;height:25px;background:#efefef"><span><span class="r" style="color:#1a1acc"><i class="k">小</i></span></span></div>
<div style="left:0px;top:655px;width:1px;height:25px;background:#99ad99"></div>
<div style="left:81px;top:655px;width:1px;height:25px;background:#ccd6cc"></div>
<div class="c" style="left:1px;top:655px;width:80px;height:25px;background:#003300;color:#fff"><span><span class="ty"><i class="k">日皇杯</i></span></span></div>
<div style="left:0px;top:680px;width:82px;height:1px;background:#99d699"></div>
<div class="c" style="left:82px;top:655px;width:80px;height:25px;background:#fff"><span>25-06-11</span></div>
<div class="c" style="left:163px;top:655px;width:98px;height:25px;background:#fff"><span><span style="color:#1f801f"><i class="k">清水鼓动</i></span></span></div>
<div class="c" style="left:262px;top:655px;width:95px;height:25px;background:#fff"><span><span style="color:#cc0000">4-2</span>(2-1)</span></div>
<div class="c" style="left:358px;top:655px;width:40px;height:25px;background:#fff"><span>3-5</span></div>
<div class="c" style="left:399px;top:655px;width:78px;height:25px;background:#fff"><span><i class="k">松本山雅</i></span></div>
<div class="c" style="left:478px;top:655px;width:50px;height:25px;background:#fdf9f6"><span>0.92</span></div>
<div class="c" style="left:529px;top:655px;width:88px;height:25px;background:#fdf9f6"><span><i class="k">两球</i></span></div>
<div class="c" style="left:618px;top:655px;width:54px;height:25px;background:#fdf9f6"><span>0.90</span></div>
<div class="c" style="left:673px;top:655px;width:64px;height:25px;background:#f1f8fc"><span>1.17</span></div>
<div class="c" style="left:738px;top:655px;width:64px;height:25px;background:#f1f8fc"><span>6.54</span></div>
<div class="c" style="left:803px;top:655px;width:81px;height:25px;background:#f1f8fc"><span>12.85</span></div>
<div class="c" style="left:885px;top:655px;width:40px;height:25px;background:#fff"><span><span class="r" style="color:#f00000"><i class="k">胜</i></span></span></div>
<div class="c" style="left:926px;top:655px;width:40px;height:25px;background:#fff"><span><span class="r" style="color:#009900"><i class="k">走</i></span></span></div>
<div class="c" style="left:967px;top:655px;width:60px;height:25px;background:#fff"><span><span class="r" style="color:#f00000"><i class="k">大</i></span></span></div>
<div style="left:0px;top:681px;width:1px;height:25px;background:#99d699"></div>
<div style="left:81px;top:681px;width:1px;height:25px;background:#ccebcc"></div>
<div class="c" style="left:1px;top:681px;width:80px;height:25px;background:#009900;color:#fff"><span><span class="ty"><i class="k">日职联</i></span></span></div>
<div style="left:0px;top:706px;width:82px;height:1px;background:#99d699"></div>
<div class="c" style="left:82px;top:681px;width:80px;height:25px;background:#efefef"><span>25-06-01</span></div>
<div class="c" style="left:163px;top:681px;width:98px;height:25px;background:#efefef"><span><i class="k">大阪樱花</i></span></div>
<div class="c" style="left:262px;top:681px;width:95px;height:25px;background:#efefef"><span><span style="color:#cc0000">4-2</span>(2-1)</span></div>
<div class="c" style="left:358px;top:681px;width:40px;height:25px;background:#efefef"><span>13-3</span></div>
<div class="c" style="left:399px;top:681px;width:78px;height:25px;background:#efefef"><span><span style="color:#1f801f"><i class="k">清水鼓动</i></span></span></div>
<div class="c" style="left:478px;top:681px;width:50px;height:25px;background:#fdf9f6"><span>0.96</span></div>
<div class="c" style="left:529px;top:681px;width:88px;height:25px;background:#fdf9f6"><span><i class="k">平手</i></span></div>
<div class="c" style="left:618px;top:681px;width:54px;height:25px;background:#fdf9f6"><span>0.93</span></div>
<div class="c" style="left:673px;top:681px;width:64px;height:25px;background:#f1f8fc"><span>2.38</span></div>
<div class="c" style="left:738px;top:681px;width:64px;height:25px;background:#f1f8fc"><span>3.53</span></div>
<div class="c" style="left:803px;top:681px;width:81px;height:25px;background:#f1f8fc"><span>2.68</span></div>
<div class="c" style="left:885px;top:681px;width:40px;height:25px;background:#efefef"><span><span class="r" style="color:#1a1acc"><i class="k">负</i></span></span></div>
<div class="c" style="left:926px;top:681px;width:40px;height:25px;background:#efefef"><span><span class="r" style="color:#1a1acc"><i class="k">输</i></span></span></div>
<div class="c" style="left:967px;top:681px;width:60px;height:25px;background:#efefef"><span><span class="r" style="color:#f00000"><i class="k">大</i></span></span></div>
<div class="c" style="left:1px;top:707px;width:1026px;height:25px;background:#fff;letter-spacing:0.2px"><span><i class="k">近</i><span style="color:#cc0000">10</span><i class="k">场</i>,<i class="k">胜</i>2<i class="k">平</i>3<i class="k">负</i>5, <i class="k">胜率</i>:<span style="color:#cc0000">20%</span> <i class="k">让胜率</i>:<span style="color:#cc0000">25%</span> <i class="k">大率</i>:<span style="color:#cc0000">30%</span> <i class="k">单率</i>:<span style="color:#cc0000">30%</span></span></div>
<div style="left:0;top:733px;width:1028px;height:2px;background:#fff"></div></body></html>
